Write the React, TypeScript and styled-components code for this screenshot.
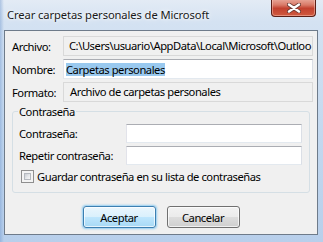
import styled, { createGlobalStyle } from 'styled-components';

const GlobalStyle = createGlobalStyle`
  html, body {
    margin: 0;
    padding: 0;
  }
  body {
    width: 323px;
    height: 242px;
    overflow: hidden;
    font-family: "Noto Sans", "Open Sans", sans-serif;
    font-size: 11.2px;
    letter-spacing: -0.45px;
    color: #000;
  }
`;

const Window = styled.div`
  width: 323px;
  height: 242px;
  display: flex;
  flex-direction: column;
  background:
    linear-gradient(90deg, rgba(110, 150, 205, 0.45) 0, rgba(110, 150, 205, 0) 4px),
    linear-gradient(180deg, #e3ebf5 0, #d4e2f2 22px, #c3d8ef 55%, #b8cfeb 100%);
`;

const TitleBar = styled.div`
  height: 30px;
  flex: none;
  display: flex;
  justify-content: space-between;
  align-items: flex-start;
  padding-left: 7px;
`;

const Title = styled.div`
  margin-top: 7px;
  line-height: 15px;
  font-size: 11.2px;
  letter-spacing: -0.1px;
  color: #1a1a1a;
  text-shadow: 0 0 6px #fff, 0 0 3px #fff;
`;

const CloseButton = styled.div`
  width: 45px;
  height: 18px;
  margin-right: 7px;
  margin-top: -1px;
  box-sizing: border-box;
  border: 1px solid #5b1f17;
  border-top: none;
  border-radius: 0 0 4px 4px;
  background: linear-gradient(180deg, #e9a99b 0, #d97a68 35%, #c2412f 55%, #d05a3f 100%);
  box-shadow: inset 0 0 0 1px rgba(255, 210, 200, 0.45);
  display: flex;
  align-items: center;
  justify-content: center;
`;

const Client = styled.div`
  flex: 1;
  margin: 0 5px 7px 4px;
  border: 1px solid #6e7b8a;
  background: #f0f0f0;
  padding-top: 5px;
  display: flex;
  flex-direction: column;
`;

const FieldGrid = styled.div`
  display: grid;
  grid-template-columns: 51px 1fr;
  row-gap: 3px;
  align-items: center;
  padding: 0 4px 0 7px;
`;

const Label = styled.div`
  line-height: 15px;
  white-space: nowrap;
`;

const StaticBox = styled.div<{ $pad: number }>`
  height: 20px;
  box-sizing: border-box;
  border: 1px solid #d9d9d9;
  background: #f0f0f0;
  padding-left: ${(p) => p.$pad}px;
  line-height: 18px;
  white-space: nowrap;
  overflow: hidden;
`;

const EditBox = styled.div<{ $pad?: number }>`
  height: 20px;
  box-sizing: border-box;
  border: 1px solid;
  border-color: #abadb3 #dbdfe6 #e3e9ef #e2e3ea;
  background: #fff;
  padding-left: ${(p) => p.$pad ?? 2}px;
  display: flex;
  align-items: center;
  white-space: nowrap;
  overflow: hidden;
`;

const Selected = styled.span`
  display: inline-block;
  height: 13px;
  line-height: 13px;
  background: #99c9ef;
  color: #000;
`;

const Group = styled.fieldset`
  margin: 2px 7px 0 7px;
  border: 1px solid #d5dfe5;
  border-radius: 3px;
  padding: 5px 7px 8px 5px;
  min-width: 0;
`;

const Legend = styled.legend`
  padding: 0 1px;
  line-height: 15px;
`;

const PasswordGrid = styled.div`
  display: grid;
  grid-template-columns: 108px 1fr;
  row-gap: 3px;
  align-items: center;
`;

const PasswordLabel = styled(Label)`
  padding-left: 1px;
`;

const PasswordInput = styled(EditBox)`
  height: 19px;
`;

const CheckRow = styled.label`
  display: flex;
  align-items: center;
  gap: 3px;
  margin: 4px 0 0 3px;
  line-height: 15px;
`;

const CheckBox = styled.span`
  width: 13px;
  height: 13px;
  box-sizing: border-box;
  border: 1px solid #8f8f8f;
  background: #f4f4f4;
  padding: 2px;
  flex: none;
  &::after {
    content: '';
    display: block;
    width: 100%;
    height: 100%;
    box-sizing: border-box;
    border: 1px solid #b5b9bf;
    background: linear-gradient(135deg, #c9cdd3 0, #e6e8eb 55%, #f7f7f7 100%);
  }
`;

const ButtonRow = styled.div`
  display: flex;
  justify-content: center;
  gap: 11px;
  margin-top: 13px;
`;

const Button = styled.div<{ $default?: boolean }>`
  width: 73px;
  height: 22px;
  box-sizing: border-box;
  border: 1px solid ${(p) => (p.$default ? '#3c7fb1' : '#707070')};
  border-radius: 3px;
  background: ${(p) =>
    p.$default
      ? 'linear-gradient(180deg, #eaf6fd 0, #d9f0fc 50%, #bee6fd 50%, #a7d9f5 100%)'
      : 'linear-gradient(180deg, #f2f2f2 0, #ebebeb 50%, #dddddd 50%, #cfcfcf 100%)'};
  box-shadow: inset 0 0 0 1px rgba(255, 255, 255, 0.7)
    ${(p) => (p.$default ? ', 0 0 2px 1px rgba(80, 180, 240, 0.6)' : '')};
  display: flex;
  align-items: center;
  justify-content: center;
  line-height: 15px;
`;

const CloseGlyph = () => (
  <svg width="14" height="10" viewBox="0 0 14 10">
    <path d="M2 1.5 L12 8.5 M12 1.5 L2 8.5" stroke="#6b3a33" strokeWidth="4" strokeLinecap="round" />
    <path d="M2 1.5 L12 8.5 M12 1.5 L2 8.5" stroke="#fff" strokeWidth="2.4" strokeLinecap="round" />
  </svg>
);

export default function App() {
  return (
    <>
      <GlobalStyle />
      <Window>
        <TitleBar>
          <Title>Crear carpetas personales de Microsoft</Title>
          <CloseButton>
            <CloseGlyph />
          </CloseButton>
        </TitleBar>
        <Client>
          <FieldGrid>
            <Label>Archivo:</Label>
            <StaticBox $pad={5}>C:\Users\usuario\AppData\Local\Microsoft\Outloo</StaticBox>
            <Label>Nombre:</Label>
            <EditBox>
              <Selected>Carpetas personales</Selected>
            </EditBox>
            <Label>Formato:</Label>
            <StaticBox $pad={6}>Archivo de carpetas personales</StaticBox>
          </FieldGrid>
          <Group>
            <Legend>Contraseña</Legend>
            <PasswordGrid>
              <PasswordLabel>Contraseña:</PasswordLabel>
              <PasswordInput />
              <PasswordLabel>Repetir contraseña:</PasswordLabel>
              <PasswordInput />
            </PasswordGrid>
            <CheckRow>
              <CheckBox />
              Guardar contraseña en su lista de contraseñas
            </CheckRow>
          </Group>
          <ButtonRow>
            <Button $default>Aceptar</Button>
            <Button>Cancelar</Button>
          </ButtonRow>
        </Client>
      </Window>
    </>
  );
}
